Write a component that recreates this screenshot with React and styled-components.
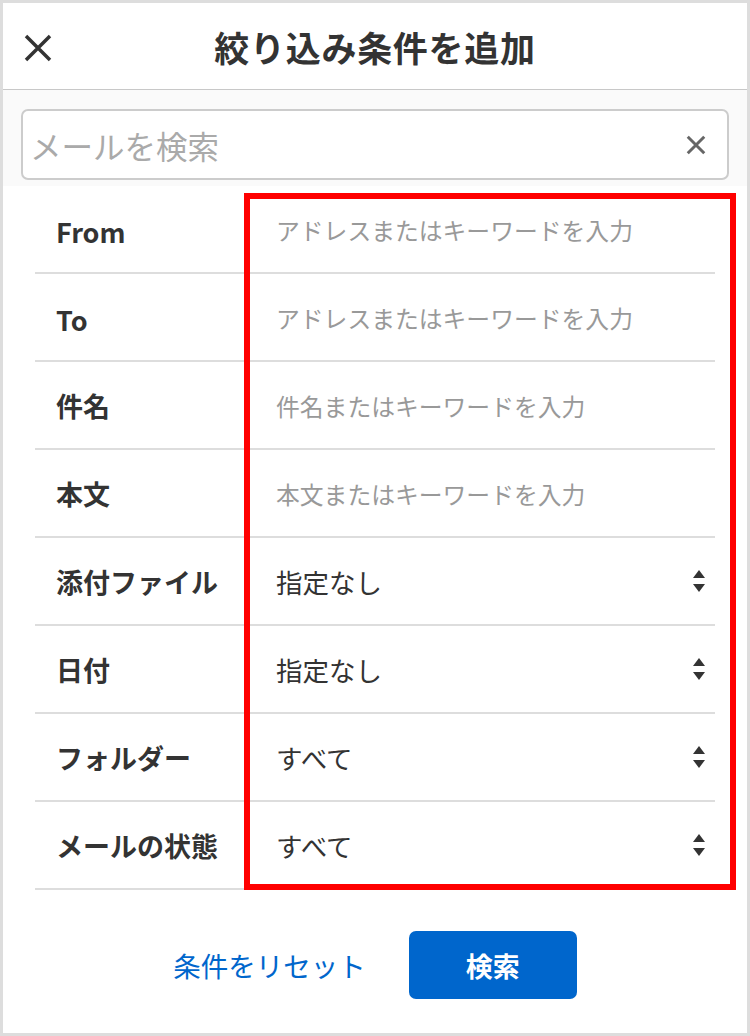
import React from 'react';
import styled, { createGlobalStyle } from 'styled-components';

const GlobalStyle = createGlobalStyle`
	html, body {
		margin: 0;
		padding: 0;
		background: #fff;
	}
	body {
		font-family: "Noto Sans CJK JP", "Noto Sans", sans-serif;
		color: #333;
	}
	* {
		box-sizing: border-box;
	}
`;

const Frame = styled.div`
	position: relative;
	width: 750px;
	height: 1036px;
	border: 3px solid #ddd;
	background: #fff;
	display: flex;
	flex-direction: column;
`;

const Header = styled.header`
	height: 87px;
	flex: none;
	border-bottom: 1px solid #c8c8c8;
	display: flex;
	align-items: center;
	justify-content: center;
	position: relative;
`;

const CloseButton = styled.button`
	position: absolute;
	left: 18px;
	top: 28px;
	width: 34px;
	height: 34px;
	padding: 0;
	border: none;
	background: none;
	display: flex;
	align-items: center;
	justify-content: center;
`;

const Title = styled.h1`
	margin: 0;
	font-size: 35px;
	font-weight: 700;
	color: #333;
	letter-spacing: 0.7px;
	line-height: 1;
`;

const SearchArea = styled.div`
	flex: none;
	height: 96px;
	background: #fafafa;
	padding: 19px 18px 6px;
`;

const SearchBox = styled.div`
	height: 71px;
	border: 2px solid #ccc;
	border-radius: 7px;
	background: #fff;
	display: flex;
	align-items: center;
	padding: 0 20px 0 7px;
`;

const SearchInput = styled.input`
	flex: 1;
	border: none;
	outline: none;
	background: transparent;
	font-family: inherit;
	font-size: 31.5px;
	color: #333;
	padding: 0;

	&::placeholder {
		color: #aaa;
	}
`;

const FieldList = styled.div`
	margin: 0 32px;
	display: flex;
	flex-direction: column;
`;

const Row = styled.div`
	height: 88px;
	display: flex;
	align-items: center;
	border-bottom: 2px solid #ddd;
`;

const Label = styled.div`
	width: 241px;
	flex: none;
	padding-left: 21px;
	padding-top: ${({ latin }) => (latin ? '5px' : '0')};
	font-size: 27px;
	font-weight: 700;
	color: #333;
	white-space: nowrap;
`;

const TextField = styled.input`
	flex: 1;
	border: none;
	outline: none;
	background: transparent;
	font-family: inherit;
	font-size: 23.8px;
	color: #333;
	padding: 0;

	&::placeholder {
		color: #999;
	}
`;

const SelectField = styled.div`
	flex: 1;
	display: flex;
	align-items: center;
	justify-content: space-between;
	padding-right: 10px;
	font-size: 26.5px;
	color: #333;
`;

const Footer = styled.div`
	flex: 1;
	display: flex;
	justify-content: center;
	align-items: flex-start;
	gap: 43px;
	padding-top: 41px;
`;

const ResetLink = styled.a`
	height: 68px;
	display: flex;
	align-items: center;
	font-size: 27.5px;
	color: #0066cc;
	text-decoration: none;
`;

const SearchButton = styled.button`
	width: 168px;
	height: 68px;
	border: none;
	border-radius: 7px;
	background: #0066cc;
	color: #fff;
	font-family: inherit;
	font-size: 27px;
	font-weight: 700;
`;

const Highlight = styled.div`
	position: absolute;
	left: 241px;
	top: 190px;
	width: 492px;
	height: 697px;
	border: 6px solid #ff0000;
	pointer-events: none;
`;

const CrossIcon = ({ size, color, stroke }) => (
	<svg width={size} height={size} viewBox="0 0 24 24">
		<path d="M3 3 L21 21 M21 3 L3 21" stroke={color} strokeWidth={stroke} strokeLinecap="butt" fill="none" />
	</svg>
);

const SortArrows = () => (
	<svg width="12" height="22" viewBox="0 0 12 22">
		<path d="M6 0 L12 8 L0 8 Z" fill="#333" />
		<path d="M0 14 L12 14 L6 22 Z" fill="#333" />
	</svg>
);

const textFields = [
	{ label: 'From', placeholder: 'アドレスまたはキーワードを入力', latin: true },
	{ label: 'To', placeholder: 'アドレスまたはキーワードを入力', latin: true },
	{ label: '件名', placeholder: '件名またはキーワードを入力' },
	{ label: '本文', placeholder: '本文またはキーワードを入力' },
];

const selectFields = [
	{ label: '添付ファイル', value: '指定なし' },
	{ label: '日付', value: '指定なし' },
	{ label: 'フォルダー', value: 'すべて' },
	{ label: 'メールの状態', value: 'すべて' },
];

const App = () => (
	<>
		<GlobalStyle />
		<Frame>
			<Header>
				<CloseButton aria-label="閉じる">
					<CrossIcon size={32} color="#333" stroke={2.6} />
				</CloseButton>
				<Title>絞り込み条件を追加</Title>
			</Header>
			<SearchArea>
				<SearchBox>
					<SearchInput placeholder="メールを検索" />
					<CrossIcon size={22} color="#666" stroke={3.2} />
				</SearchBox>
			</SearchArea>
			<FieldList>
				{textFields.map(({ label, placeholder, latin }) => (
					<Row key={label}>
						<Label latin={latin}>{label}</Label>
						<TextField placeholder={placeholder} />
					</Row>
				))}
				{selectFields.map(({ label, value }) => (
					<Row key={label}>
						<Label>{label}</Label>
						<SelectField>
							<span>{value}</span>
							<SortArrows />
						</SelectField>
					</Row>
				))}
			</FieldList>
			<Footer>
				<ResetLink href="#">条件をリセット</ResetLink>
				<SearchButton>検索</SearchButton>
			</Footer>
			<Highlight />
		</Frame>
	</>
);

export default App;
